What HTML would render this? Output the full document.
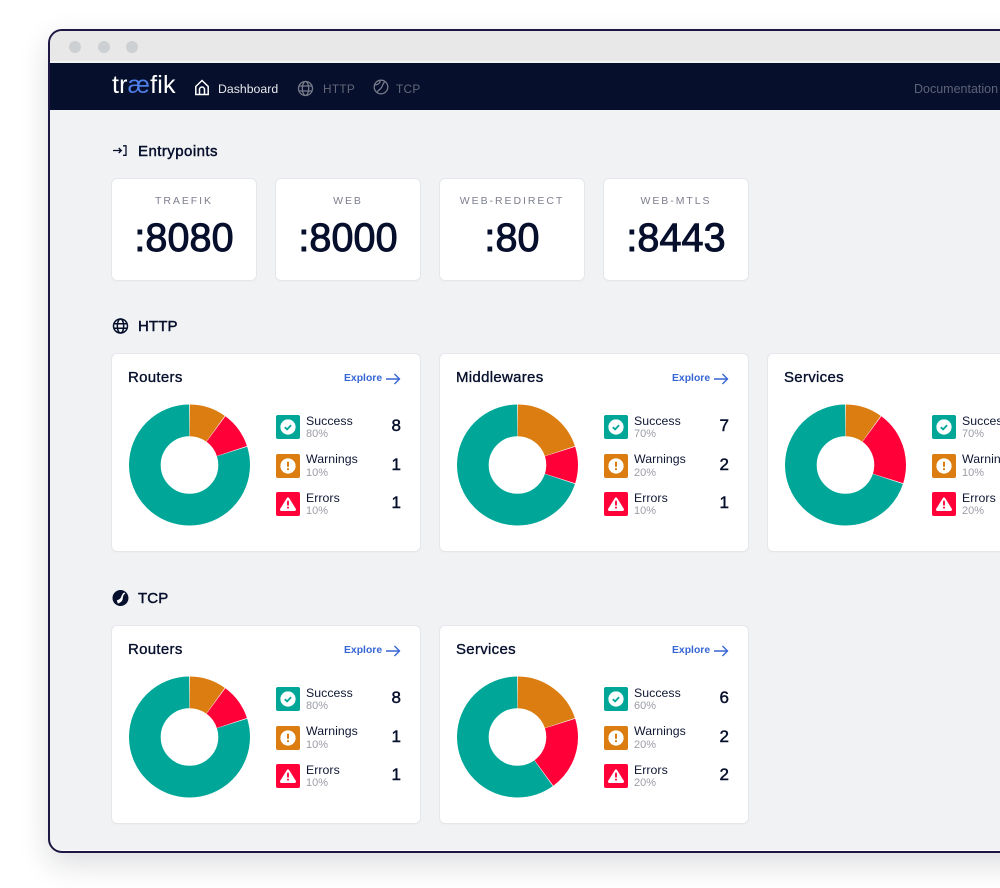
<!DOCTYPE html>
<html><head><meta charset="utf-8"><style>
*{box-sizing:border-box}
html,body{margin:0;padding:0;width:1000px;height:888px;overflow:hidden;background:#fff;font-family:"Liberation Sans",sans-serif;color:#060f2c}
.win{position:absolute;left:48px;top:29px;width:1100px;height:824px;border:2px solid #1e1743;border-radius:14px;background:#f1f2f4;overflow:hidden;box-shadow:0 11px 30px rgba(20,25,40,.15),inset 0 -1px 0 #fff}
.tb{position:absolute;left:0;top:0;right:0;height:31px;background:#e8e8e8;border-bottom:1px solid #f4f4f4}
.dot{position:absolute;top:10px;width:12px;height:12px;border-radius:50%;background:#cdd0d2}
.nav{position:absolute;left:0;top:32px;right:0;height:47px;background:#060f2c}
.a{position:absolute;white-space:nowrap}
.t{position:absolute;white-space:nowrap;line-height:20px}
.h{font-size:15px;-webkit-text-stroke:.45px #060f2c;letter-spacing:.45px}
.ep{position:absolute;top:179px;width:144px;height:101px;background:#fff;border-radius:5px;box-shadow:0 0 0 1px #e6e7ea,0 1px 2px rgba(0,0,0,.05);text-align:center}
.ep b{display:block;font-weight:400;font-size:10.5px;letter-spacing:1.95px;color:#7c7f8e;margin-top:15px;line-height:14px}
.ep i{display:block;font-style:normal;font-size:39.5px;line-height:46px;margin-top:7px;-webkit-text-stroke:1px #060f2c;letter-spacing:.1px}
.c{position:absolute;width:308px;height:197px;background:#fff;border-radius:5px;box-shadow:0 0 0 1px #e6e7ea,0 1px 2px rgba(0,0,0,.05)}
.c .n{position:absolute;left:16px;top:14px;font-size:15px;line-height:20px;-webkit-text-stroke:.35px #060f2c;white-space:nowrap;letter-spacing:.3px}
.c .e{position:absolute;left:232px;top:18px;font-size:10.4px;line-height:14px;font-weight:700;color:#3665d4;white-space:nowrap}
.c svg.ar{position:absolute;left:274px;top:19px}
.c svg.d{position:absolute;left:16px;top:49px}
.k{position:absolute;left:164px;width:24px;height:24px;border-radius:2px}
.k svg{display:block}
.l{position:absolute;left:194px;font-size:12.3px;line-height:14px;white-space:nowrap;color:#0f1733;letter-spacing:.05px}
.s{position:absolute;left:194px;font-size:11px;line-height:13px;color:#9b9da6;white-space:nowrap}
.v{position:absolute;left:250px;width:39px;text-align:right;font-size:17px;line-height:20px;-webkit-text-stroke:.45px #060f2c}
.g{background:#00a697}.o{background:#db7d11}.r{background:#ff0039}
</style></head><body>
<div class="win">
 <div class="tb"><span class="dot" style="left:19px"></span><span class="dot" style="left:47.500px"></span><span class="dot" style="left:76px"></span></div>
 <div class="nav"></div>
</div>

<div class="a" style="left:112px;top:70px;font-size:25px;line-height:30px;color:#fff;letter-spacing:.2px">tr<span style="color:#4f7fe8">æ</span>fik</div>
<svg class="a" style="left:194px;top:79px" width="16" height="17" viewBox="0 0 16 17" fill="none" stroke="#fff" stroke-width="1.500"><path d="M1.800 7.500 8 1.500l6.200 6V15.500H1.800zM5.500 15.500V10.500a2.500 2.500 0 0 1 5 0v5"/></svg>
<div class="t" style="left:218px;top:79px;font-size:12.3px;color:#e8e9ec">Dashboard</div>
<svg class="a" style="left:297px;top:80px" width="17" height="17" viewBox="0 0 17 17" fill="none" stroke="#777b8a" stroke-width="1.300"><circle cx="8.500" cy="8.500" r="7"/><ellipse cx="8.500" cy="8.500" rx="3.200" ry="7"/><path d="M1.500 6h14M1.500 11h14"/></svg>
<div class="t" style="left:323px;top:79px;font-size:11.800px;letter-spacing:.3px;color:#646879">HTTP</div>
<svg class="a" style="left:373px;top:79px" width="16" height="16" viewBox="0 0 16 16" fill="none" stroke="#777b8a" stroke-width="1.300"><circle cx="8" cy="8" r="6.800"/><path d="M12 2.600C9.300 4.500 10 7 8 9.200S5.200 11 3.800 13.400M7 1.500C7.300 3.500 6 5.500 1.800 6"/></svg>
<div class="t" style="left:396px;top:79px;font-size:11.800px;letter-spacing:.3px;color:#646879">TCP</div>
<div class="t" style="left:914px;top:79px;font-size:12.500px;color:#5d6276">Documentation</div>

<svg class="a" style="left:112px;top:144px" width="16" height="14" viewBox="0 0 16 14" fill="none" stroke="#060f2c" stroke-width="1.300"><path d="M1 6.500h8M6.700 4l2.600 2.500L6.700 9M11 1.800h3v9.500h-3"/></svg>
<div class="t h" style="left:138px;top:142px">Entrypoints</div>

<div class="ep" style="left:112px"><b>TRAEFIK</b><i>:8080</i></div>
<div class="ep" style="left:276px"><b>WEB</b><i>:8000</i></div>
<div class="ep" style="left:440px"><b>WEB-REDIRECT</b><i>:80</i></div>
<div class="ep" style="left:604px"><b>WEB-MTLS</b><i>:8443</i></div>

<svg class="a" style="left:112px;top:318px" width="17" height="16" viewBox="0 0 17 16" fill="none" stroke="#060f2c" stroke-width="1.500"><circle cx="8.500" cy="8" r="7"/><ellipse cx="8.500" cy="8" rx="3.200" ry="7"/><path d="M1.500 5.700h14M1.500 10.300h14"/></svg>
<div class="t h" style="left:138px;top:317px;letter-spacing:.1px">HTTP</div>

<svg class="a" style="left:112px;top:590px" width="17" height="16" viewBox="0 0 17 16"><circle cx="8.500" cy="8" r="8" fill="#060f2c"/><path d="M12.300 2.500C10.300 3.500 9.800 5.500 9 7.300S7 9.500 4.800 10.500L5.800 13.500C8.500 13 10.600 11 10.800 8.300 11 6.300 11.500 4.500 13.300 3.500z" fill="#fff"/></svg>
<div class="t h" style="left:138px;top:589px;letter-spacing:.1px">TCP</div>

<!-- HTTP Routers -->
<div class="c" style="left:112px;top:354px"><div class="n">Routers</div><div class="e">Explore</div>
<svg class="ar" width="15" height="12" viewBox="0 0 15 12" fill="none" stroke="#3665d4" stroke-width="1.400"><path d="M0 6h13.500M8.500 1l5 5-5 5"/></svg>
<svg class="d" width="124" height="124" viewBox="0 0 124 124"><g transform="rotate(-90 61.500 62)" fill="none" stroke-width="31.700"><circle cx="61.500" cy="62" r="44.650" pathLength="100" stroke="#db7d11" stroke-dasharray="9.800 90.200" stroke-dashoffset="-.1"/><circle cx="61.500" cy="62" r="44.650" pathLength="100" stroke="#ff0039" stroke-dasharray="9.800 90.200" stroke-dashoffset="-10.100"/><circle cx="61.500" cy="62" r="44.650" pathLength="100" stroke="#00a697" stroke-dasharray="79.800 20.200" stroke-dashoffset="-20.100"/></g></svg>
<div class="k g" style="top:61px"><svg width="24" height="24" viewBox="0 0 24 24"><circle cx="12" cy="12" r="7.600" fill="#fff"/><path d="M8.800 12.200l2.300 2.200 4-4.300" fill="none" stroke="#00a697" stroke-width="1.800"/></svg></div><div class="l" style="top:59.500px">Success</div><div class="s" style="top:74px">80%</div><div class="v" style="top:62px">8</div>
<div class="k o" style="top:100px"><svg width="24" height="24" viewBox="0 0 24 24"><circle cx="12" cy="12" r="7.600" fill="#fff"/><path d="M12 7.800v5M12 14.300v1.800" fill="none" stroke="#db7d11" stroke-width="2"/></svg></div><div class="l" style="top:98px">Warnings</div><div class="s" style="top:112.500px">10%</div><div class="v" style="top:101px">1</div>
<div class="k r" style="top:138px"><svg width="24" height="24" viewBox="0 0 24 24"><path d="M12 7 18.500 17.500h-13z" fill="#fff" stroke="#fff" stroke-width="3" stroke-linejoin="round"/><path d="M12 8.800v4.700M12 14.700v1.800" fill="none" stroke="#ff0039" stroke-width="1.800"/></svg></div><div class="l" style="top:136.500px">Errors</div><div class="s" style="top:151px">10%</div><div class="v" style="top:139px">1</div>
</div>

<!-- HTTP Middlewares -->
<div class="c" style="left:440px;top:354px"><div class="n">Middlewares</div><div class="e">Explore</div>
<svg class="ar" width="15" height="12" viewBox="0 0 15 12" fill="none" stroke="#3665d4" stroke-width="1.400"><path d="M0 6h13.500M8.500 1l5 5-5 5"/></svg>
<svg class="d" width="124" height="124" viewBox="0 0 124 124"><g transform="rotate(-90 61.500 62)" fill="none" stroke-width="31.700"><circle cx="61.500" cy="62" r="44.650" pathLength="100" stroke="#db7d11" stroke-dasharray="19.800 80.200" stroke-dashoffset="-.1"/><circle cx="61.500" cy="62" r="44.650" pathLength="100" stroke="#ff0039" stroke-dasharray="9.800 90.200" stroke-dashoffset="-20.100"/><circle cx="61.500" cy="62" r="44.650" pathLength="100" stroke="#00a697" stroke-dasharray="69.800 30.200" stroke-dashoffset="-30.100"/></g></svg>
<div class="k g" style="top:61px"><svg width="24" height="24" viewBox="0 0 24 24"><circle cx="12" cy="12" r="7.600" fill="#fff"/><path d="M8.800 12.200l2.300 2.200 4-4.300" fill="none" stroke="#00a697" stroke-width="1.800"/></svg></div><div class="l" style="top:59.500px">Success</div><div class="s" style="top:74px">70%</div><div class="v" style="top:62px">7</div>
<div class="k o" style="top:100px"><svg width="24" height="24" viewBox="0 0 24 24"><circle cx="12" cy="12" r="7.600" fill="#fff"/><path d="M12 7.800v5M12 14.300v1.800" fill="none" stroke="#db7d11" stroke-width="2"/></svg></div><div class="l" style="top:98px">Warnings</div><div class="s" style="top:112.500px">20%</div><div class="v" style="top:101px">2</div>
<div class="k r" style="top:138px"><svg width="24" height="24" viewBox="0 0 24 24"><path d="M12 7 18.500 17.500h-13z" fill="#fff" stroke="#fff" stroke-width="3" stroke-linejoin="round"/><path d="M12 8.800v4.700M12 14.700v1.800" fill="none" stroke="#ff0039" stroke-width="1.800"/></svg></div><div class="l" style="top:136.500px">Errors</div><div class="s" style="top:151px">10%</div><div class="v" style="top:139px">1</div>
</div>

<!-- HTTP Services -->
<div class="c" style="left:768px;top:354px"><div class="n">Services</div><div class="e">Explore</div>
<svg class="ar" width="15" height="12" viewBox="0 0 15 12" fill="none" stroke="#3665d4" stroke-width="1.400"><path d="M0 6h13.500M8.500 1l5 5-5 5"/></svg>
<svg class="d" width="124" height="124" viewBox="0 0 124 124"><g transform="rotate(-90 61.500 62)" fill="none" stroke-width="31.700"><circle cx="61.500" cy="62" r="44.650" pathLength="100" stroke="#db7d11" stroke-dasharray="9.800 90.200" stroke-dashoffset="-.1"/><circle cx="61.500" cy="62" r="44.650" pathLength="100" stroke="#ff0039" stroke-dasharray="19.800 80.200" stroke-dashoffset="-10.100"/><circle cx="61.500" cy="62" r="44.650" pathLength="100" stroke="#00a697" stroke-dasharray="69.800 30.200" stroke-dashoffset="-30.100"/></g></svg>
<div class="k g" style="top:61px"><svg width="24" height="24" viewBox="0 0 24 24"><circle cx="12" cy="12" r="7.600" fill="#fff"/><path d="M8.800 12.200l2.300 2.200 4-4.300" fill="none" stroke="#00a697" stroke-width="1.800"/></svg></div><div class="l" style="top:59.500px">Success</div><div class="s" style="top:74px">70%</div><div class="v" style="top:62px">7</div>
<div class="k o" style="top:100px"><svg width="24" height="24" viewBox="0 0 24 24"><circle cx="12" cy="12" r="7.600" fill="#fff"/><path d="M12 7.800v5M12 14.300v1.800" fill="none" stroke="#db7d11" stroke-width="2"/></svg></div><div class="l" style="top:98px">Warnings</div><div class="s" style="top:112.500px">10%</div><div class="v" style="top:101px">1</div>
<div class="k r" style="top:138px"><svg width="24" height="24" viewBox="0 0 24 24"><path d="M12 7 18.500 17.500h-13z" fill="#fff" stroke="#fff" stroke-width="3" stroke-linejoin="round"/><path d="M12 8.800v4.700M12 14.700v1.800" fill="none" stroke="#ff0039" stroke-width="1.800"/></svg></div><div class="l" style="top:136.500px">Errors</div><div class="s" style="top:151px">20%</div><div class="v" style="top:139px">2</div>
</div>

<!-- TCP Routers -->
<div class="c" style="left:112px;top:626px"><div class="n">Routers</div><div class="e">Explore</div>
<svg class="ar" width="15" height="12" viewBox="0 0 15 12" fill="none" stroke="#3665d4" stroke-width="1.400"><path d="M0 6h13.500M8.500 1l5 5-5 5"/></svg>
<svg class="d" width="124" height="124" viewBox="0 0 124 124"><g transform="rotate(-90 61.500 62)" fill="none" stroke-width="31.700"><circle cx="61.500" cy="62" r="44.650" pathLength="100" stroke="#db7d11" stroke-dasharray="9.800 90.200" stroke-dashoffset="-.1"/><circle cx="61.500" cy="62" r="44.650" pathLength="100" stroke="#ff0039" stroke-dasharray="9.800 90.200" stroke-dashoffset="-10.100"/><circle cx="61.500" cy="62" r="44.650" pathLength="100" stroke="#00a697" stroke-dasharray="79.800 20.200" stroke-dashoffset="-20.100"/></g></svg>
<div class="k g" style="top:61px"><svg width="24" height="24" viewBox="0 0 24 24"><circle cx="12" cy="12" r="7.600" fill="#fff"/><path d="M8.800 12.200l2.300 2.200 4-4.300" fill="none" stroke="#00a697" stroke-width="1.800"/></svg></div><div class="l" style="top:59.500px">Success</div><div class="s" style="top:74px">80%</div><div class="v" style="top:62px">8</div>
<div class="k o" style="top:100px"><svg width="24" height="24" viewBox="0 0 24 24"><circle cx="12" cy="12" r="7.600" fill="#fff"/><path d="M12 7.800v5M12 14.300v1.800" fill="none" stroke="#db7d11" stroke-width="2"/></svg></div><div class="l" style="top:98px">Warnings</div><div class="s" style="top:112.500px">10%</div><div class="v" style="top:101px">1</div>
<div class="k r" style="top:138px"><svg width="24" height="24" viewBox="0 0 24 24"><path d="M12 7 18.500 17.500h-13z" fill="#fff" stroke="#fff" stroke-width="3" stroke-linejoin="round"/><path d="M12 8.800v4.700M12 14.700v1.800" fill="none" stroke="#ff0039" stroke-width="1.800"/></svg></div><div class="l" style="top:136.500px">Errors</div><div class="s" style="top:151px">10%</div><div class="v" style="top:139px">1</div>
</div>

<!-- TCP Services -->
<div class="c" style="left:440px;top:626px"><div class="n">Services</div><div class="e">Explore</div>
<svg class="ar" width="15" height="12" viewBox="0 0 15 12" fill="none" stroke="#3665d4" stroke-width="1.400"><path d="M0 6h13.500M8.500 1l5 5-5 5"/></svg>
<svg class="d" width="124" height="124" viewBox="0 0 124 124"><g transform="rotate(-90 61.500 62)" fill="none" stroke-width="31.700"><circle cx="61.500" cy="62" r="44.650" pathLength="100" stroke="#db7d11" stroke-dasharray="19.800 80.200" stroke-dashoffset="-.1"/><circle cx="61.500" cy="62" r="44.650" pathLength="100" stroke="#ff0039" stroke-dasharray="19.800 80.200" stroke-dashoffset="-20.100"/><circle cx="61.500" cy="62" r="44.650" pathLength="100" stroke="#00a697" stroke-dasharray="59.800 40.200" stroke-dashoffset="-40.100"/></g></svg>
<div class="k g" style="top:61px"><svg width="24" height="24" viewBox="0 0 24 24"><circle cx="12" cy="12" r="7.600" fill="#fff"/><path d="M8.800 12.200l2.300 2.200 4-4.300" fill="none" stroke="#00a697" stroke-width="1.800"/></svg></div><div class="l" style="top:59.500px">Success</div><div class="s" style="top:74px">60%</div><div class="v" style="top:62px">6</div>
<div class="k o" style="top:100px"><svg width="24" height="24" viewBox="0 0 24 24"><circle cx="12" cy="12" r="7.600" fill="#fff"/><path d="M12 7.800v5M12 14.300v1.800" fill="none" stroke="#db7d11" stroke-width="2"/></svg></div><div class="l" style="top:98px">Warnings</div><div class="s" style="top:112.500px">20%</div><div class="v" style="top:101px">2</div>
<div class="k r" style="top:138px"><svg width="24" height="24" viewBox="0 0 24 24"><path d="M12 7 18.500 17.500h-13z" fill="#fff" stroke="#fff" stroke-width="3" stroke-linejoin="round"/><path d="M12 8.800v4.700M12 14.700v1.800" fill="none" stroke="#ff0039" stroke-width="1.800"/></svg></div><div class="l" style="top:136.500px">Errors</div><div class="s" style="top:151px">20%</div><div class="v" style="top:139px">2</div>
</div>
</body></html>
